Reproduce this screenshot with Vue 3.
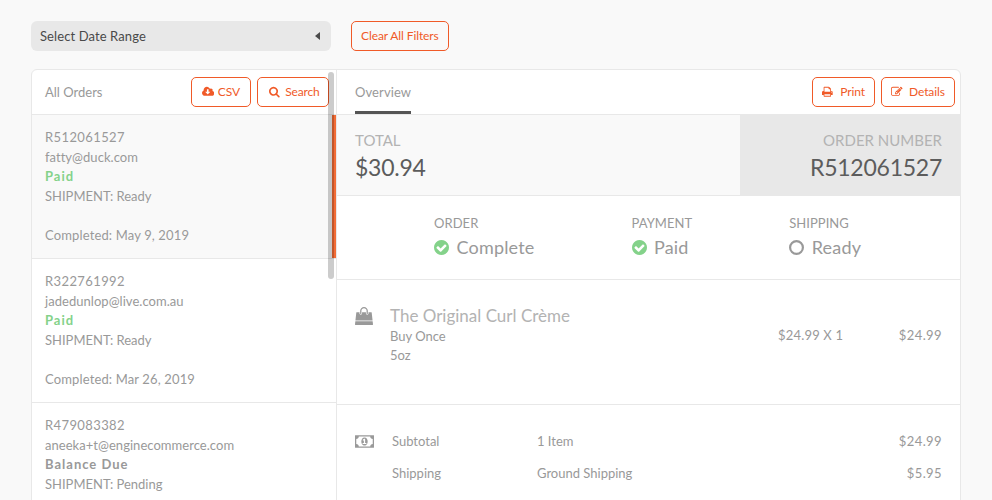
<script setup>
const orders = [
  { number: 'R512061527', email: 'fatty@duck.com', status: 'Paid', shipment: 'Ready', completed: 'May 9, 2019', active: true },
  { number: 'R322761992', email: 'jadedunlop@live.com.au', status: 'Paid', shipment: 'Ready', completed: 'Mar 26, 2019' },
  { number: 'R479083382', email: 'aneeka+t@enginecommerce.com', status: 'Balance Due', shipment: 'Pending' },
]

const stages = [
  { label: 'ORDER', value: 'Complete', done: true },
  { label: 'PAYMENT', value: 'Paid', done: true },
  { label: 'SHIPPING', value: 'Ready', done: false },
]

const charges = [
  { label: 'Subtotal', detail: '1 Item', amount: '$24.99' },
  { label: 'Shipping', detail: 'Ground Shipping', amount: '$5.95' },
]
</script>

<template>
  <div class="page">
    <div class="filters">
      <div class="range">
        <span>Select Date Range</span>
        <svg class="caret" viewBox="0 0 5 8"><path d="M5 0v8L0 4z" /></svg>
      </div>
      <button class="btn clear">Clear All Filters</button>
    </div>

    <div class="card">
      <aside class="sidebar">
        <header class="bar side-bar">
          <span class="heading">All Orders</span>
          <button class="btn csv">
            <svg viewBox="0 0 1920 1792"><path d="M1280 928q0-14-9-23t-23-9h-224v-352q0-13-9.5-22.5t-22.5-9.5h-192q-13 0-22.5 9.5t-9.5 22.5v352h-224q-13 0-22.5 9.5t-9.5 22.5q0 14 9 23l352 352q9 9 23 9t23-9l351-351q10-12 10-24zm640 224q0 159-112.5 271.5t-271.5 112.5h-1088q-185 0-316.5-131.5t-131.5-316.5q0-130 70-240t188-165q-2-30-2-43 0-212 150-362t362-150q156 0 285.5 87t188.5 231q71-62 166-62 106 0 181 75t75 181q0 76-41 138 130 31 213.5 135.5t83.5 238.5z" /></svg>
            <span>CSV</span>
          </button>
          <button class="btn search">
            <svg viewBox="64 0 1664 1792"><path d="M1216 832q0-185-131.5-316.5t-316.5-131.5-316.5 131.5-131.5 316.5 131.5 316.5 316.5 131.5 316.5-131.5 131.5-316.5zm512 832q0 52-38 90t-90 38q-54 0-90-38l-343-342q-179 124-399 124-143 0-273.5-55.5t-225-150-150-225-55.5-273.5 55.5-273.5 150-225 225-150 273.5-55.5 273.5 55.5 225 150 150 225 55.5 273.5q0 220-124 399l343 343q37 37 37 90z" /></svg>
            <span>Search</span>
          </button>
        </header>
        <div v-for="o in orders" :key="o.number" class="order" :class="{ active: o.active }">
          <div class="order-number">{{ o.number }}</div>
          <div class="email">{{ o.email }}</div>
          <div class="status" :class="{ paid: o.status === 'Paid' }">{{ o.status }}</div>
          <div>SHIPMENT: {{ o.shipment }}</div>
          <div v-if="o.completed" class="completed">Completed: {{ o.completed }}</div>
        </div>
        <div class="thumb"></div>
      </aside>

      <main class="detail">
        <header class="bar main-bar">
          <span class="tab">Overview</span>
          <button class="btn print">
            <svg viewBox="64 0 1664 1792"><path d="M448 1536h896v-256h-896v256zm0-640h896v-384h-160q-40 0-68-28t-28-68v-160h-640v640zm1152 64q0-26-19-45t-45-19-45 19-19 45 19 45 45 19 45-19 19-45zm128 0v416q0 13-9.5 22.5t-22.5 9.5h-224v160q0 40-28 68t-68 28h-960q-40 0-68-28t-28-68v-160h-224q-13 0-22.5-9.5t-9.5-22.5v-416q0-79 56.5-135.5t135.5-56.5h64v-544q0-40 28-68t68-28h672q40 0 88 20t76 48l152 152q28 28 48 76t20 88v256h64q79 0 135.5 56.5t56.5 135.5z" /></svg>
            <span>Print</span>
          </button>
          <button class="btn details">
            <svg viewBox="0 0 1792 1792"><path d="M888 1184l116-116-152-152-116 116v56h96v96h56zm440-720q-16-16-33 1l-350 350q-17 17-1 33t33-1l350-350q17-17 1-33zm80 594v190q0 119-84.5 203.5t-203.5 84.5h-832q-119 0-203.5-84.5t-84.5-203.5v-832q0-119 84.5-203.5t203.5-84.5h832q63 0 117 25 15 7 18 23 3 17-9 29l-49 49q-14 14-32 8-23-6-45-6h-832q-66 0-113 47t-47 113v832q0 66 47 113t113 47h832q66 0 113-47t47-113v-126q0-13 9-22l64-64q15-15 35-7t20 29zm-96-738l288 288-672 672h-288v-288zm444 132l-92 92-288-288 92-92q28-28 68-28t68 28l152 152q28 28 28 68t-28 68z" /></svg>
            <span>Details</span>
          </button>
        </header>

        <section class="summary">
          <div class="total">
            <div class="caption">TOTAL</div>
            <div class="figure">$30.94</div>
          </div>
          <div class="number">
            <div class="caption">ORDER NUMBER</div>
            <div class="figure">R512061527</div>
          </div>
        </section>

        <section class="stages">
          <div v-for="s in stages" :key="s.label" class="stage">
            <div class="stage-label">{{ s.label }}</div>
            <div class="stage-value">
              <svg v-if="s.done" class="done" viewBox="128 128 1536 1536"><path d="M1412 734q0-28-18-46l-91-90q-19-19-45-19t-45 19l-408 407-226-226q-19-19-45-19t-45 19l-91 90q-18 18-18 46 0 27 18 45l362 362q19 19 45 19 27 0 46-19l543-543q18-18 18-45zm252 162q0 209-103 385.5t-279.5 279.5-385.5 103-385.5-103-279.5-279.5-103-385.5 103-385.5 279.5-279.5 385.5-103 385.5 103 279.5 279.5 103 385.5z" /></svg>
              <svg v-else viewBox="0 0 1536 1536"><circle class="ring" cx="768" cy="768" r="656" /></svg>
              <span>{{ s.value }}</span>
            </div>
          </div>
        </section>

        <section class="item">
          <svg class="bag" viewBox="0 0 1792 1792"><path d="M1757 1408l35 313q3 28-16 50-19 21-48 21h-1664q-29 0-48-21-19-22-16-50l35-313h1722zm-93-839l86 775h-1708l86-775q3-24 21-40.5t43-16.5h256v128q0 53 37.5 90.5t90.5 37.5 90.5-37.5 37.5-90.5v-128h384v128q0 53 37.5 90.5t90.5 37.5 90.5-37.5 37.5-90.5v-128h256q25 0 43 16.5t21 40.5zm-384-185v256q0 26-19 45t-45 19-45-19-19-45v-256q0-106-75-181t-181-75-181 75-75 181v256q0 26-19 45t-45 19-45-19-19-45v-256q0-159 112.5-271.5t271.5-112.5 271.5 112.5 112.5 271.5z" /></svg>
          <div class="item-info">
            <div class="item-name">The Original Curl Crème</div>
            <div>Buy Once</div>
            <div>5oz</div>
          </div>
          <div class="unit">$24.99 X 1</div>
          <div class="amount">$24.99</div>
        </section>

        <section class="charges">
          <svg class="money" viewBox="0 256 1920 1280"><path d="M768 1152h384v-96h-128v-448h-114l-148 137 77 80q42-37 55-57h2v288h-128v96zm512-256q0 70-21 142t-59.5 134-101.5 101-138 39-138-39-101.5-101-59.5-134-21-142 21-142 59.5-134 101.5-101 138-39 138 39 101.5 101 59.5 134 21 142zm512 256v-512q-106 0-181-75t-75-181h-1152q0 106-75 181t-181 75v512q106 0 181 75t75 181h1152q0-106 75-181t181-75zm128-832v1152q0 26-19 45t-45 19h-1792q-26 0-45-19t-19-45v-1152q0-26 19-45t45-19h1792q26 0 45 19t19 45z" /></svg>
          <div class="charge-rows">
            <div v-for="c in charges" :key="c.label" class="charge">
              <span>{{ c.label }}</span>
              <span>{{ c.detail }}</span>
              <span class="amount">{{ c.amount }}</span>
            </div>
          </div>
        </section>
      </main>
    </div>
  </div>
</template>

<style>
body {
  background: #f9f9f9;
  overflow: hidden;
}
</style>

<style scoped>
* {
  box-sizing: border-box;
}

.page {
  height: 500px;
  overflow: hidden;
  padding: 21px 31px 0;
  font: 13px/19.5px Lato, sans-serif;
  color: #999;
}

svg {
  display: block;
  flex: none;
  fill: currentColor;
}

.filters {
  display: flex;
  gap: 20px;
  height: 30px;
}

.range {
  display: flex;
  align-items: center;
  justify-content: space-between;
  width: 300px;
  padding: 0 11px 0 9px;
  border-radius: 6px;
  background: #e8e8e8;
  color: #4a4a4a;
  letter-spacing: 0.1px;
}

.range span {
  padding-top: 2px;
}

.caret {
  width: 5px;
  height: 8px;
}

.btn {
  display: flex;
  align-items: center;
  height: 30px;
  padding: 0 9px;
  border: 1px solid #f05a28;
  border-radius: 5px;
  background: #fff;
  color: #f05a28;
  font: 12px/18px Lato, sans-serif;
  letter-spacing: -0.1px;
  white-space: nowrap;
}

.btn svg {
  height: 11.5px;
}

.clear {
  width: 98px;
  background: transparent;
}

.card {
  display: flex;
  width: 930px;
  height: 600px;
  margin-top: 18px;
  border: 1px solid #e8e8e8;
  border-radius: 6px;
  background: #fff;
}

.sidebar {
  position: relative;
  flex: none;
  width: 305px;
  border-right: 1px solid #e8e8e8;
}

.bar {
  display: flex;
  align-items: center;
  height: 45px;
  border-bottom: 1px solid #e8e8e8;
}

.side-bar {
  padding: 0 7px 0 13px;
  gap: 6px;
}

.heading {
  margin-right: auto;
  padding-top: 1px;
}

.csv {
  width: 60px;
  padding-left: 10px;
  gap: 3.5px;
}

.search {
  width: 72px;
  padding-left: 11px;
  gap: 5.5px;
  letter-spacing: -0.15px;
}

.order {
  height: 144px;
  padding: 13px;
  border-bottom: 1px solid #e8e8e8;
}

.order-number {
  letter-spacing: 0.4px;
}

.email {
  letter-spacing: 0.04px;
}

.active {
  background: linear-gradient(#f26c36, #f26c36) right / 4px 100% no-repeat #f9f9f9;
}

.status {
  font-weight: 700;
  letter-spacing: 1px;
}

.paid {
  color: #84d28a;
}

.completed {
  margin-top: 19.5px;
  letter-spacing: 0.14px;
}

.thumb {
  position: absolute;
  top: 2px;
  right: 2px;
  width: 6px;
  height: 207px;
  border-radius: 3px;
  background: rgba(0, 0, 0, 0.2);
}

.detail {
  flex: 1;
  min-width: 0;
}

.main-bar {
  padding: 0 5px 0 18px;
  gap: 6px;
}

.tab {
  align-self: stretch;
  width: 56px;
  margin-right: auto;
  padding-top: 13px;
  border-bottom: 3px solid #555;
  letter-spacing: 0.1px;
}

.print {
  width: 63px;
  gap: 7.5px;
}

.details {
  width: 74px;
  gap: 6.5px;
}

.summary {
  display: flex;
  height: 81px;
}

.total,
.number {
  padding: 14px 18px 0;
  border-bottom: 1px solid #e8e8e8;
}

.total {
  flex: 1;
  background: #f9f9f9;
}

.number {
  width: 220px;
  background: #e8e8e8;
  text-align: right;
}

.caption {
  font-size: 15px;
  line-height: 22px;
  color: #b3b3b3;
}

.figure {
  font-size: 23px;
  line-height: 32px;
  letter-spacing: -0.25px;
  color: #5c5c5c;
}

.stages {
  display: flex;
  gap: 97px;
  height: 84px;
  padding: 18px 0 0 97px;
  border-bottom: 1px solid #e8e8e8;
}

.stage-label {
  letter-spacing: 0.05px;
}

.stage-value {
  display: flex;
  align-items: center;
  gap: 7.5px;
  height: 28px;
  font-size: 18px;
  letter-spacing: 0.18px;
}

.stage-value svg {
  width: 15px;
  height: 15px;
}

.done {
  color: #84d28a;
}

.ring {
  fill: none;
  stroke: currentColor;
  stroke-width: 224;
}

.item {
  display: flex;
  height: 125px;
  padding: 25px 18px 0;
  border-bottom: 1px solid #e8e8e8;
}

.bag {
  width: 18px;
  height: 18px;
  margin-top: 2px;
}

.item-info {
  width: 388px;
  margin-left: 17px;
  line-height: 19px;
}

.item-name {
  font-size: 17px;
  line-height: 22px;
  color: #b3b3b3;
}

.unit {
  padding-top: 21px;
  letter-spacing: 0.18px;
}

.amount {
  letter-spacing: 0.4px;
}

.item .amount {
  margin-left: auto;
  padding-top: 21px;
}

.charges {
  display: flex;
  padding: 20px 18px 0;
}

.money {
  width: 19px;
  height: 13px;
  margin-top: 10px;
}

.charge-rows {
  flex: 1;
  margin-left: 18px;
}

.charge {
  display: grid;
  grid-template-columns: 145px 1fr auto;
  align-items: center;
  height: 32px;
  padding-top: 2px;
}
</style>
